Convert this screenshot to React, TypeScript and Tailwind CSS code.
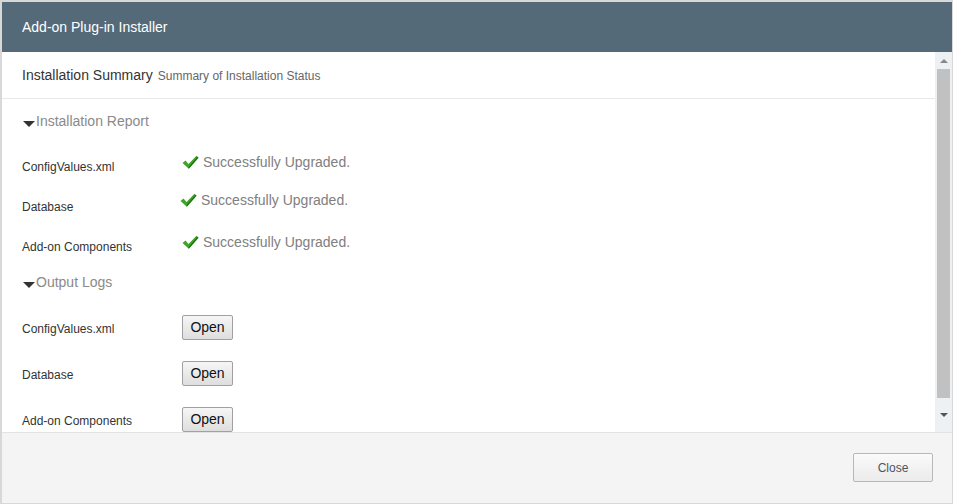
import React from 'react';

const font = { fontFamily: '"Liberation Sans", Arial, sans-serif' };

const Check = () => (
  <svg width="17" height="15" viewBox="0 0 17 15" className="shrink-0">
    <path d="M0.5 8 L3.5 5.5 L6.5 9 L14.5 0.8 L16.5 2.8 L6.8 13.8 Z" fill="#3fa528" />
    <path d="M6.8 13.8 L16.5 2.8 L15.5 1.8 L6.6 12 Z" fill="#23701a" />
  </svg>
);

const Caret = () => (
  <span className="inline-block w-0 h-0 border-l-[6px] border-r-[6px] border-t-[6px] border-l-transparent border-r-transparent border-t-[#333] mt-[5px] mr-[1px]" />
);

const statusRows = [
  { label: 'ConfigValues.xml', pt: 'pt-[8px]', ml: 'ml-0' },
  { label: 'Database', pt: 'pt-[6px]', ml: 'ml-[-2px]' },
  { label: 'Add-on Components', pt: 'pt-[8px]', ml: 'ml-0' },
];

const logRows = ['ConfigValues.xml', 'Database', 'Add-on Components'];

export default function App() {
  return (
    <div className="w-[953px] h-[504px] bg-[#d8d8d8] pt-[2px] pl-[2px] pr-[1px] pb-[1px]" style={font}>
      <div className="w-full h-full flex flex-col bg-white overflow-hidden">
        {/* Header */}
        <div className="h-[50px] shrink-0 bg-[#546a78] flex items-center pl-[20px] text-white text-[14px]">
          Add-on Plug-in Installer
        </div>

        {/* Body */}
        <div className="h-[380px] shrink-0 flex">
          <div className="flex-1 overflow-hidden">
            <div className="h-[47px] border-b border-[#e8e8e8] flex items-center pl-[20px] pt-[1px]">
              <span className="text-[14px] text-[#333]">Installation Summary</span>
              <span className="text-[12px] text-[#666] ml-[5px]">Summary of Installation Status</span>
            </div>

            <div className="mt-[12px] h-[20px] flex items-center pl-[21px] text-[14px] text-[#8a8a8a]">
              <Caret />
              Installation Report
            </div>

            <div className="mt-[14px]">
              {statusRows.map((r) => (
                <div key={r.label} className="h-[40px] flex pl-[20px]">
                  <div className="w-[160px] pt-[14px] text-[12px] leading-[16px] text-[#333]">{r.label}</div>
                  <div className={`${r.pt} ${r.ml} flex items-center gap-[4px] text-[14px] leading-[18px] text-[#808080] h-fit`}>
                    <Check />
                    Successfully Upgraded.
                  </div>
                </div>
              ))}
            </div>

            <div className="mt-[7px] h-[20px] flex items-center pl-[21px] text-[14px] text-[#8a8a8a]">
              <Caret />
              Output Logs
            </div>

            <div className="mt-[12px]">
              {logRows.map((l) => (
                <div key={l} className="h-[46px] flex items-center pl-[20px]">
                  <div className="w-[160px] text-[12px] leading-[16px] text-[#333] mt-[3px]">{l}</div>
                  <button className="w-[51px] h-[25px] border border-[#a0a0a0] rounded-[2px] bg-gradient-to-b from-[#f6f6f6] to-[#dedede] text-[14px] text-[#111]">
                    Open
                  </button>
                </div>
              ))}
            </div>
          </div>

          {/* Scrollbar */}
          <div className="w-[17px] shrink-0 bg-[#edf1f3] flex flex-col items-center">
            <div className="h-[17px] flex items-center justify-center">
              <span className="w-0 h-0 border-l-[4px] border-r-[4px] border-b-[4px] border-l-transparent border-r-transparent border-b-[#888]" />
            </div>
            <div className="w-[13px] h-[329px] bg-[#c1c1c1]" />
            <div className="flex-1 flex items-center justify-center">
              <span className="w-0 h-0 border-l-[4px] border-r-[4px] border-t-[4px] border-l-transparent border-r-transparent border-t-[#555]" />
            </div>
          </div>
        </div>

        {/* Footer */}
        <div className="flex-1 bg-[#f4f4f4] border-t border-[#e2e2e2] flex justify-end items-start pt-[20px] pr-[19px]">
          <button className="w-[80px] h-[29px] border border-[#b8b8b8] rounded-[2px] bg-gradient-to-b from-[#fafafa] to-[#ebebeb] text-[12px] text-[#4a5560]">
            Close
          </button>
        </div>
      </div>
    </div>
  );
}
